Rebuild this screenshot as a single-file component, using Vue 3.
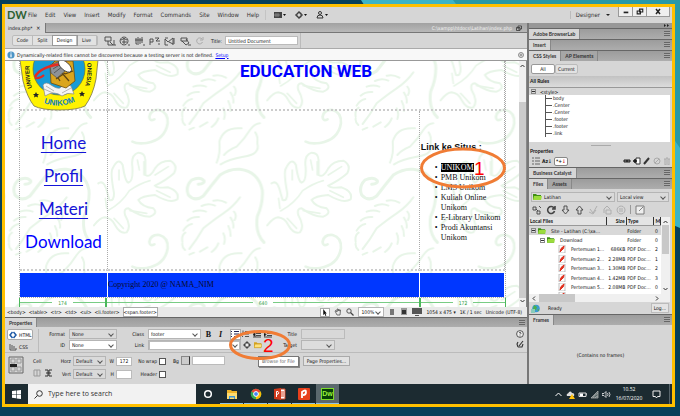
<script setup>
import { ref } from 'vue'

const menus = ['File', 'Edit', 'View', 'Insert', 'Modify', 'Format', 'Commands', 'Site', 'Window', 'Help']
const views = ['Code', 'Split', 'Design', 'Live']
const view = ref('Design')
const title = ref('Untitled Document')
const format = ref('None')
const idName = ref('None')
const className = ref('footer')
const link = ref('')
const pageTitle = ref('')
const cellWidth = ref('172')
const cellHeight = ref('')
const bg = ref('')
const search = ref('')

const toolIcons = [
  'M1 1h6v4H1zM4 5v4h6V4M6 6l3 3M10 9h2',
  'M5 1a4 4 0 1 0 .1 0M2 4q3-3 6 0M3 6h5M5 2v6M9 9h2',
  'M2 2v6M4 1v6M6 2v6M8 1v6M1 4h8M2 8h3M9 9h2',
  'M1 3v6M1 3h3v3H1M6 2h4l-3 3h4M9 8h2',
  'M1 2h3M1 9V3l3 3 5-4v7M5 6l4 2M1 9h3M10 2v6',
  'M2 2h6v3H2zM3 5l4 4 3-2-3-4M9 9h3'
]
const rules = ['body', '.Center', '.Center', '.footer', '.footer', '.link']
const files = [
  ['Pertemuan 1…', '686KB', '2'],
  ['Pertemuan 2…', '2.28MB', '1'],
  ['Pertemuan 3…', '1.30MB', '2'],
  ['Pertemuan 4…', '1.42MB', '3'],
  ['Pertemuan 5…', '2.08MB', '0'],
  ['Pertemuan 6…', '1.95MB', '0']
]
const nav = ['Home', 'Profil', 'Materi']
const tags = ['<body>', '<table>', '<tr>', '<td>', '<ul>', '<li.footer>']
const fileTools = [
  'M1 2h3v3H1zM5 6h3v3H5zM4 4l2 2M7 1l2 2',
  'M8 3a3.5 3.5 0 1 0 .5 3M9 1v3H6',
  'M4 1h3v4h2L5.500 9 2 5h2z',
  'M4 9h3V5h2L5.500 1 2 5h2z',
  'M2 4l3 4 4-7M1 7l4 2 3-4',
  'M2 8V4l3-3 3 3M4 5h5v4H4z',
  'M5 1a4 4 0 1 0 .1 0M3 4h4M3 6h4'
]
const offsets = [[0, 0], [-520, 0], [520, 0], [0, -375], [0, 375], [520, -375], [-520, 375]]
</script>

<template>
  <main class="desktop">
    <svg class="wallpaper" viewBox="0 0 680 416" preserveAspectRatio="none" aria-hidden="true">
      <path d="M0 0h680v416H0z" fill="#07405a" />
      <path d="M361 0H680V228L666 222V8H366z" fill="#3db4c7" />
      <path d="M453 0H680V148L666 128V8H459z" fill="#2899a8" />
    </svg>

    <div class="frame">
      <header class="menubar">
        <strong class="brand">DW</strong>
        <nav class="menus"><button v-for="m in menus" :key="m" type="button">{{ m }}</button></nav>
        <div class="quick">
          <svg class="i12" viewBox="0 0 12 10"><path d="M0 2h8v6H0z" fill="#444" /><path d="M2 3v4M4 3v4M0 5h6" stroke="#aaa" stroke-width=".6" /><path d="M9 4h3l-1.500 2z" fill="#111" /></svg>
          <svg class="i12" viewBox="0 0 12 10"><circle cx="4" cy="5" r="2.300" fill="none" stroke="#333" stroke-width="1.300" /><path d="M4 1v1M4 8v1M0 5h1M7 5h1" stroke="#333" /><path d="M9 4h3l-1.500 2z" fill="#111" /></svg>
          <svg class="i12" viewBox="0 0 12 10"><circle cx="4" cy="3" r="1.500" fill="none" stroke="#333" /><path d="M1 8q0-3 3-3t3 3z" fill="none" stroke="#333" /><path d="M9 4h3l-1.500 2z" fill="#111" /></svg>
        </div>
        <button type="button" class="workspace">Designer <span class="tri"></span></button>
        <div class="winbtns">
          <button type="button" aria-label="Minimize"><svg viewBox="0 0 14 9"><path d="M5 5.500h5" stroke="#222" stroke-width="1.800" /></svg></button>
          <button type="button" aria-label="Restore"><svg viewBox="0 0 14 9"><path d="M7 2h3.500v3H7zM4.500 4H8v3H4.500z" fill="#eee" stroke="#222" stroke-width="1.200" /></svg></button>
          <button type="button" aria-label="Close" class="wide"><svg viewBox="0 0 14 9"><path d="M5 2l4 5M9 2L5 7" stroke="#222" stroke-width="1.500" /></svg></button>
        </div>
      </header>

      <div class="work">
        <section class="editor">
          <div class="tabs">
            <span class="doctab">index.php* <b>×</b></span>
            <span class="path">C:\xampp\htdocs\Latihan\index.php</span>
            <svg class="i6" viewBox="0 0 6 6"><path d="M2 1h3.500v3H2zM.5 2.500H4v3H.5z" fill="#bbb" stroke="#333" stroke-width=".8" /></svg>
          </div>

          <div class="toolbar">
            <div class="views">
              <button v-for="v in views" :key="v" type="button" :class="{ on: v === view }" @click="view = v">{{ v }}</button>
            </div>
            <div class="tools">
              <svg v-for="(d, i) in toolIcons" :key="i" class="i12" viewBox="0 0 12 10"><path :d="d" fill="none" stroke="#444" stroke-width=".9" /></svg>
              <svg class="i12" viewBox="0 0 12 10"><path d="M8 3a3 3 0 1 0 .5 3M9 1v3H6" fill="none" stroke="#aaa" /></svg>
            </div>
            <label for="doc-title">Title:</label>
            <input id="doc-title" v-model="title" class="titlebox" />
            <span class="rule"></span>
          </div>

          <div class="info">
            <svg class="i8" viewBox="0 0 8 8"><circle cx="4" cy="4" r="3.600" fill="#4b94c6" /><path d="M4 3.300v3M4 1.500v1" stroke="#fff" stroke-width="1.200" /></svg>
            <span>Dynamically-related files cannot be discovered because a testing server is not defined.</span>
            <a href="#">Setup</a>
            <svg class="i6 end" viewBox="0 0 6 6"><circle cx="3" cy="3" r="2.500" fill="#ddd" stroke="#777" stroke-width=".8" /><path d="M2 2l2 2M4 2L2 4" stroke="#777" stroke-width=".6" /></svg>
          </div>

          <div class="docwrap">
            <div class="doc">
              <svg class="leaves" aria-hidden="true">
                <defs>
                  <pattern id="leaf" width="520" height="375" patternUnits="userSpaceOnUse" patternTransform="translate(95 39) scale(.3333)">
                    <g v-for="(o, i) in offsets" :key="i" :transform="`translate(${o[0]} ${o[1]})`" fill="none" stroke="#e8f5e8" stroke-linecap="round">
                      <path stroke-width="8" d="M163 433Q148 440 148 425Q152 403 178 405Q205 412 203 445Q195 495 140 504Q112 508 97 500" />
                      <path stroke-width="6" d="M-5 250Q10 240 18 265L28 300Q42 305 42 280Q30 215 38 205Q55 170 68 195Q75 245 85 248Q100 245 97 200Q92 165 115 158Q135 158 136 180V225Q150 235 165 205Q180 182 210 182Q235 195 222 220Q200 240 165 257Q170 265 205 262Q240 275 232 298Q210 312 165 285Q125 288 115 300Q125 320 160 325Q175 340 150 350Q120 350 85 325Q70 325 75 345Q95 380 80 397Q60 403 45 375Q35 355 15 352Q0 352-18 376" />
                      <path stroke-width="5" d="M22 333Q65 310 88 272Q120 250 150 242M132 185V225M112 180L118 210M57 210V240M165 225L205 200M170 272L210 292M90 332L140 340M42 355L70 385M16 295L20 325" />
                      <path stroke-width="6" d="M350 188Q362 160 358 125Q370 80 425 85M362 193Q385 178 430 170Q482 163 472 130Q475 110 466 97M372 165Q385 150 410 140Q435 115 450 90Q465 70 480 70" />
                      <path stroke-width="9" d="M295 253Q315 250 312 242Q300 228 275 240Q255 260 265 285Q285 307 310 288Q335 255 360 225Q390 205 420 208Q475 215 487 270Q490 310 472 350Q465 400 492 427" />
                      <path stroke-width="6" d="M268 447Q290 420 310 385Q340 360 370 340Q400 320 420 292M340 302Q360 297 378 308M305 318Q325 308 345 317M280 335Q300 328 318 335M262 362Q275 350 297 351M250 392Q258 376 276 372M247 425Q244 405 256 398M255 450Q245 440 247 430M268 464L282 458M300 455L322 442M335 456Q350 445 355 430M372 432Q378 415 370 400M392 408Q392 390 385 378M400 383Q402 368 392 353M404 360Q412 345 402 335" />
                    </g>
                  </pattern>
                </defs>
                <rect width="100%" height="100%" fill="url(#leaf)" />
              </svg>

              <div class="grid">
                <div class="c logo">
                  <svg viewBox="0 0 87 50" role="img" aria-label="Universitas Komputer Indonesia UNIKOM">
                    <path d="M0 -1L3 20Q7 36 14 45Q22 49 39 49Q57 49 65 45Q73 34 76 18L78 -1z" fill="#fff200" stroke="#76714a" stroke-width=".8" />
                    <g transform="translate(-1 0)">
                    <circle cx="40" cy="8" r="26" fill="#169bd7" stroke="#6d7433" stroke-width=".7" />
                    <path d="M24 24q3-4 8 0 6 4 9 3 5-6 11-2l3 8q-7-2-12 2-8-6-17 0z" fill="#f4f4f4" stroke="#888" stroke-width=".7" />
                    <path d="M25 28l9 4M27 25l8 5M43 32l9-5" stroke="#888" stroke-width=".6" />
                    <path d="M31 5l5-5h18l2 20-9 7-15-5z" fill="#dba51d" stroke="#6d4c10" stroke-width=".8" />
                    <path d="M33 7l8 13M36 4l14 16M46 13l8-3M37 18l9-6" stroke="#604713" stroke-width="1.300" />
                    <path d="M31 4l8-3 7 9-8 7-6-5z" fill="#8e9298" stroke="#444" stroke-width=".6" />
                    <path d="M34 8l8-5M35 12l9-7" stroke="#333" stroke-width=".6" />
                    <path d="M16 16Q21 5 48 2" fill="none" stroke="#e52b22" stroke-width="2.600" />
                    <path d="M16 17q5 1 9-3" fill="none" stroke="#e52b22" stroke-width="2" />
                    <ellipse cx="46" cy="5" rx="8" ry="4" transform="rotate(42 46 5)" fill="#fff" stroke="#333" stroke-width=".8" />
                    <path d="M17 31l1 2h2l-1.500 1.500.5 2-2-1-2 1 .5-2-1.500-1.500h2zM63 30l1 2h2l-1.500 1.500.5 2-2-1-2 1 .5-2-1.500-1.500h2z" fill="#222" />
                    <path id="arcL" d="M13 27Q9 14 11 0" fill="none" />
                    <path id="arcR" d="M68 2Q70 15 65 28" fill="none" />
                    <path id="arcB" d="M20 40Q40 50 61 38" fill="none" />
                    <text class="seal"><textPath href="#arcL">UNIVER</textPath></text>
                    <text class="seal"><textPath href="#arcR">ONESIA</textPath></text>
                    <text class="seal big"><textPath href="#arcB" startOffset="50%" text-anchor="middle">UNIKOM</textPath></text>
                    </g>
                  </svg>
                </div>
                <div class="c heading"><h1>EDUCATION WEB</h1></div>
                <nav class="c sitenav">
                  <a v-for="n in nav" :key="n" href="#">{{ n }}</a>
                  <a href="#" class="plain">Download</a>
                </nav>
                <div class="c"></div>
                <div class="c links">
                  <h2>Link ke Situs :</h2>
                  <ul>
                    <li><mark>UNIKOM</mark></li>
                    <li>PMB Unikom</li>
                    <li>LMS Unikom</li>
                    <li>Kuliah Online Unikom</li>
                    <li>E-Library Unikom</li>
                    <li>Prodi Akuntansi Unikom</li>
                  </ul>
                </div>
                <div class="f"></div>
                <div class="f">Copyright 2020 @ NAMA_NIM</div>
                <div class="f"></div>
              </div>

              <div class="ruler">
                <span>174</span><span>640</span><span>172</span>
              </div>
            </div>
            <div class="vscroll">
              <svg viewBox="0 0 7 6"><path d="M1.500 4L3.500 2l2 2" fill="none" stroke="#333" /></svg>
              <span class="thumb"></span>
              <svg viewBox="0 0 7 6"><path d="M1.500 2l2 2 2-2" fill="none" stroke="#333" /></svg>
            </div>
          </div>

          <div class="status">
            <span v-for="t in tags" :key="t">{{ t }}</span>
            <span class="cur">&lt;span.footer&gt;</span>
            <div class="stools">
              <button type="button" aria-label="Select" class="arrowbtn"><svg viewBox="0 0 8 8"><path d="M2 0l4 5H4.500L5.500 7.500l-1 .5L3.400 5.500 2 7z" fill="#111" /></svg></button>
              <svg class="i8" viewBox="0 0 8 8"><path d="M2 5L1 3l1-.5L3 4V1h1v2l1-2v2l1.500-1L6 7H3z" fill="none" stroke="#555" stroke-width=".8" /></svg>
              <svg class="i8" viewBox="0 0 8 8"><circle cx="3" cy="3" r="2.200" fill="none" stroke="#555" /><path d="M4.500 4.500l3 3" stroke="#444" stroke-width="1.300" /></svg>
              <span class="sel zoom"><select aria-label="Zoom"><option>100%</option></select></span>
              <svg class="i8" viewBox="0 0 8 8"><path d="M2 1h4v6H2z" fill="#777" /></svg>
              <svg class="i8" viewBox="0 0 8 8"><path d="M1 0h6v7H1z" fill="#999" /><path d="M2 2h4v4H2z" fill="#333" /></svg>
              <svg class="i10" viewBox="0 0 10 8"><path d="M0 0h10v6H0zM3 7h4v1H3z" fill="#555" /></svg>
              <span>1054 x 475 ▾</span><span>1K / 1 sec</span><span>Unicode (UTF-8)</span>
            </div>
          </div>

          <div class="panelhead"><span class="ptab">Properties</span><i class="pm"></i></div>

          <div class="props">
            <div class="modes">
              <button type="button" class="on"><svg class="i8" viewBox="0 0 8 8"><path d="M3.500 1L1 4l2.500 3M4.500 1L7 4 4.500 7" fill="none" stroke="#1f5aa6" stroke-width="1.500" /></svg> HTML</button>
              <button type="button"><svg class="i8" viewBox="0 0 8 8"><path d="M1 1v6h6M3 2v4M5 3v3M7 5v2" fill="none" stroke="#555" /></svg> CSS</button>
            </div>
            <div class="pairs p1">
              <label for="fmt">Format</label><span class="sel dim"><select id="fmt" v-model="format"><option>None</option></select></span>
              <label for="idn">ID</label><span class="sel"><select id="idn" v-model="idName"><option>None</option></select></span>
            </div>
            <div class="pairs p2">
              <label for="cls">Class</label>
              <div class="line">
                <span class="sel cls"><select id="cls" v-model="className"><option>footer</option></select></span>
                <button type="button" class="fmt"><b>B</b></button><button type="button" class="fmt"><b><i>I</i></b></button>
                <button type="button" class="lst on" aria-label="Unordered list"><svg viewBox="0 0 8 7"><path d="M0 1h1M0 3.500h1M0 6h1M3 1h5M3 3.500h5M3 6h5" stroke="#225" /></svg></button>
                <button type="button" class="lst" aria-label="Ordered list"><svg viewBox="0 0 8 7"><path d="M1 0v3M0 6h1M3 1h4M3 3.500h4M3 6h4" stroke="#555" /></svg></button>
                <button type="button" class="lst" aria-label="Outdent"><svg viewBox="0 0 8 7"><path d="M0 1h8M3 3h5M3 5h5M0 6.500h8M0 4l2-2v4z" stroke="#333" stroke-width=".9" /></svg></button>
                <button type="button" class="lst" aria-label="Indent"><svg viewBox="0 0 8 7"><path d="M0 1h8M3 3h5M3 5h5M0 6.500h8M2 4L0 2v4z" stroke="#333" stroke-width=".9" /></svg></button>
              </div>
              <label for="lnk">Link</label>
              <div class="line">
                <span class="sel lnk"><input id="lnk" v-model="link" /></span>
                <button type="button" class="lst wide" aria-label="Point to File"><svg viewBox="0 0 8 8"><circle cx="4" cy="4" r="2.500" fill="#eee" stroke="#333" /><path d="M4 0v3M4 5v3M0 4h3M5 4h3" stroke="#333" stroke-width=".8" /></svg></button>
                <button type="button" class="lst" aria-label="Browse for File"><svg viewBox="0 0 9 8"><path d="M0 7V1h3l1 1h4v5z" fill="#d9a520" /><path d="M0 7l1-4h8L8 7z" fill="#ffe27a" stroke="#b98b14" stroke-width=".6" /></svg></button>
              </div>
            </div>
            <div class="pairs p3">
              <label for="ttl">Title</label><input id="ttl" v-model="pageTitle" class="off" />
              <label for="tgt">Target</label><span class="sel tgt"><select id="tgt" disabled><option></option></select></span>
            </div>
            <div class="help">
              <svg viewBox="0 0 8 8"><circle cx="4" cy="4" r="3.400" fill="#eee" stroke="#333" stroke-width=".8" /><path d="M3 3q1-1.500 2 0 0 .7-1 1.500M4 5.500v1" fill="none" stroke="#333" stroke-width=".8" /></svg>
              <svg viewBox="0 0 8 8"><path d="M2 7L1 4l1-2M3 6l4-5M2 7h4l1-3" fill="none" stroke="#333" stroke-width="1.100" /></svg>
            </div>
          </div>

          <div class="props cellprops">
            <div class="cellicon"><svg viewBox="0 0 16 18"><path d="M1 1h14v16H1z" fill="#d5d5d5" stroke="#666" /><path d="M3 3h4v4H3zM9 3h4v4H9zM3 11h4v4H3zM9 11h4v4H9z" fill="none" stroke="#999" /><path d="M2 8h7v3H2z" fill="#222" /></svg></div>
            <div class="cellname">
              <span>Cell</span>
              <svg viewBox="0 0 20 8"><path d="M1 1h6v6H1zM4 1v6" fill="none" stroke="#999" /><path d="M12 1h3v6h-3M19 1h-3v6h3M13 4h5" fill="none" stroke="#333" /></svg>
            </div>
            <div class="pairs p4">
              <label for="hz">Horz</label><span class="sel dim"><select id="hz"><option>Default</option></select></span>
              <label for="vt">Vert</label><span class="sel dim"><select id="vt"><option>Default</option></select></span>
            </div>
            <div class="pairs p5">
              <label for="w">W</label><input id="w" v-model="cellWidth" />
              <label for="h">H</label><input id="h" v-model="cellHeight" />
            </div>
            <div class="pairs p6">
              <label for="nw">No wrap</label><input id="nw" type="checkbox" />
              <label for="hd">Header</label><input id="hd" type="checkbox" />
            </div>
            <div class="bgline">
              <label for="bg">Bg</label><span class="swatch"></span><input id="bg" v-model="bg" />
              <span class="tip" role="tooltip">Browse for File</span>
              <button type="button" class="pp">Page Properties...</button>
            </div>
          </div>
        </section>

        <aside class="dock">
          <div class="dockbar"><svg viewBox="0 0 6 5"><path d="M0 1l2 1.500L0 4zM3 1l2 1.500L3 4z" fill="#222" /></svg></div>
          <div class="panelhead"><span class="ptab">Adobe BrowserLab</span><i class="pm"></i></div>
          <div class="panelhead"><span class="ptab">Insert</span><i class="pm"></i></div>
          <div class="panelhead"><span class="ptab">CSS Styles</span><span class="ptab back">AP Elements</span><i class="pm"></i></div>
          <div class="seg"><button type="button" class="on">All</button><button type="button">Current</button></div>
          <h3 class="allrules">All Rules</h3>
          <div class="tree">
            <div class="root"><span class="box"></span>&lt;style&gt;</div>
            <ul><li v-for="(r, i) in rules" :key="i">{{ r }}</li></ul>
          </div>
          <div class="grip"></div>
          <h3 class="subhead">Properties</h3>
          <div class="picons">
            <svg class="i8" viewBox="0 0 8 8"><path d="M0 1h2M0 4h2M0 7h2M3 1h5M3 4h5M3 7h5" stroke="#666" /></svg>
            <span class="az">Az↓</span>
            <span class="star">*+<b>↓</b></span>
            <svg class="i8 first" viewBox="0 0 8 8"><path d="M1 3h3v2H1zM4 3h3v2H4z" fill="#888" stroke="#222" /></svg>
            <svg class="i8" viewBox="0 0 8 8"><path d="M3 1h4v6H3z" fill="#fff" stroke="#333" /><path d="M0 4h4M2 2v4" stroke="#111" stroke-width="1.500" /></svg>
            <svg class="i8" viewBox="0 0 8 8"><path d="M1 7l5-6" stroke="#333" stroke-width="2" /></svg>
            <svg class="i8" viewBox="0 0 8 8"><circle cx="4" cy="4" r="3" fill="none" stroke="#aaa" /><path d="M2 6l4-4" stroke="#aaa" /></svg>
            <svg class="i8" viewBox="0 0 8 8"><path d="M1 2h6M2 2v6h4V2M3 1h2M4 3v4" fill="none" stroke="#aaa" /></svg>
          </div>
          <div class="panelhead"><span class="ptab">Business Catalyst</span><i class="pm"></i></div>
          <div class="panelhead"><span class="ptab">Files</span><span class="ptab back">Assets</span><i class="pm"></i></div>
          <div class="combos">
            <span class="sel flat"><svg class="fold" viewBox="0 0 9 8"><path d="M0 7V1h3l1 1h4v5z" fill="#3f8f14" /><path d="M0 7l1-4h8L8 7z" fill="#9bdc3c" /></svg><select aria-label="Site"><option>Latihan</option></select></span>
            <span class="sel flat"><select aria-label="View"><option>Local view</option></select></span>
          </div>
          <div class="ftools">
            <svg v-for="(d, i) in fileTools" :key="i" viewBox="0 0 10 10"><path :d="d" fill="none" :stroke="i > 3 ? '#aaa' : '#444'" :stroke-width="i === 1 ? 1.6 : .9" /></svg>
            <span class="bar"></span>
            <svg viewBox="0 0 10 10"><path d="M1 1h8v8H1zM4 6l4-4" fill="#eee" stroke="#666" stroke-width=".8" /></svg>
          </div>
          <div class="files">
            <div class="flist">
              <table>
                <thead><tr><th>Local Files</th><th class="r">Size</th><th>Type</th><th>M</th></tr></thead>
                <tbody>
                  <tr class="hl"><td><span class="name"><span class="box"></span><svg viewBox="0 0 9 8"><path d="M0 7V1h3l1 1h4v5z" fill="#3f8f14" /><path d="M0 7l1-4h8L8 7z" fill="#9bdc3c" /></svg> <em>Site - Latihan (C:\xa…</em></span></td><td></td><td>Folder</td><td>0</td></tr>
                  <tr><td><span class="name l1"><span class="box"></span><svg viewBox="0 0 9 8"><path d="M0 7V1h3l1 1h4v5z" fill="#3f8f14" /><path d="M0 7l1-4h8L8 7z" fill="#9bdc3c" /></svg> <em>Download</em></span></td><td></td><td>Folder</td><td>0</td></tr>
                  <tr v-for="f in files" :key="f[0]">
                    <td><span class="name l2"><svg viewBox="0 0 8 8"><path d="M1 0h6v8H1z" fill="#fff" stroke="#999" stroke-width=".6" /><path d="M2 7q0-4 4-6 0 3-2 4z" fill="#e0301e" stroke="#e0301e" /></svg> <em>{{ f[0] }}</em></span></td>
                    <td class="r">{{ f[1] }}</td><td>PDF Doc…</td><td>{{ f[2] }}</td>
                  </tr>
                </tbody>
              </table>
            </div>
            <div class="fscroll">
              <svg viewBox="0 0 7 6"><path d="M1.500 4L3.500 2l2 2" fill="none" stroke="#333" /></svg>
              <span class="thumb"></span>
              <svg viewBox="0 0 7 6"><path d="M1.500 2l2 2 2-2" fill="none" stroke="#333" /></svg>
            </div>
          </div>
          <div class="hscroll">
            <svg viewBox="0 0 6 7"><path d="M4 1.500L2 3.500l2 2" fill="none" stroke="#333" /></svg>
            <span></span>
            <svg viewBox="0 0 6 7"><path d="M2 1.500l2 2-2 2" fill="none" stroke="#333" /></svg>
          </div>
          <div class="ready">
            <svg viewBox="0 0 9 9"><circle cx="5" cy="4.500" r="3.800" fill="#3c9bd0" /><path d="M3 1l3 2-1 3-3-1M6 6l2-1v2z" fill="#4bb04b" /><path d="M0 5h4v4H0z" fill="#8cb" /></svg>
            <span>Ready</span><button type="button">Log...</button>
          </div>
          <div class="panelhead"><span class="ptab">Frames</span><i class="pm"></i></div>
          <div class="frames">(Contains no frames)</div>
        </aside>
      </div>

      <footer class="taskbar">
        <button type="button" class="start" aria-label="Start"><svg viewBox="0 0 9 9"><path d="M0 1l4-.5V4H0zM4.600.4L9 0v4H4.600zM0 4.600h4v3.600L0 7.700zM4.600 4.600H9V9l-4.400-.6z" fill="#fff" /></svg></button>
        <label class="search">
          <svg viewBox="0 0 9 9"><circle cx="5.500" cy="3.500" r="2.800" fill="none" stroke="#333" /><path d="M3.500 5.500L.5 8.500" stroke="#333" /></svg>
          <input v-model="search" placeholder="Type here to search" aria-label="Search" />
        </label>
        <div class="apps">
          <span><svg viewBox="0 0 12 12"><circle cx="6" cy="6" r="3.300" fill="none" stroke="#fff" stroke-width="1.500" /></svg></span>
          <span class="run"><svg viewBox="0 0 12 12"><path d="M1 2h4l1 1h5v8H1z" fill="#f0b429" /><path d="M1 5h10v6H1z" fill="#ffdc70" /><path d="M3 8h6v3H8V9.500H4V11H3z" fill="#3b96dc" /></svg></span>
          <span class="run"><svg viewBox="0 0 12 12"><circle cx="6" cy="6" r="5.300" fill="#34a853" /><path d="M6 6L1.400 3.400A5.300 5.300 0 0 1 10.600 3.400z" fill="#ea4335" /><path d="M6 6l4.600-2.600A5.300 5.300 0 0 1 6 11.300z" fill="#fbbc05" /><circle cx="6" cy="6" r="2.400" fill="#4285f4" stroke="#fff" /></svg></span>
          <span class="run"><svg viewBox="0 0 12 12"><path d="M6 1h5v10H6z" fill="#fff" stroke="#d24726" /><path d="M7 4h3M7 6h3M7 8h3" stroke="#d24726" /><path d="M0 1l7-1v12l-7-1z" fill="#d03a1c" /><path d="M2.500 9V3.500h1.500q1.500 1.200 0 2.700H2.500" fill="none" stroke="#fff" /></svg></span>
          <span class="run"><svg viewBox="0 0 12 12"><rect width="12" height="12" rx="1" fill="#e8401c" /><path d="M4 10V4q4-3 4 0 0 3-3 3" fill="none" stroke="#fff" stroke-width="1.800" /></svg></span>
          <span class="run active"><b>Dw</b></span>
        </div>
        <div class="tray">
          <svg viewBox="0 0 9 9"><path d="M1.500 6l3-3 3 3" fill="none" stroke="#fff" /></svg>
          <svg viewBox="0 0 9 9"><path d="M1 6q-1-2 1-2.500Q4 0 6 3q3 0 2 3z" fill="#ddd" /><path d="M6 4l3 5H3z" fill="#ffc20e" /></svg>
          <svg viewBox="0 0 9 9"><path d="M1 3h7v3.500H1zM8 4h1v1.500" fill="none" stroke="#ddd" /><path d="M2 3.500h3v2.500H2z" fill="#fff" /></svg>
          <svg viewBox="0 0 9 9"><path d="M1 8L8 1v7zM3 8q0-2 5-5M5 8q0-1 3-2" fill="#566" stroke="#bbb" stroke-width=".7" /></svg>
          <svg viewBox="0 0 9 9"><path d="M0 3.500h2l2-2v6l-2-2H0zM5.500 3q1 1.500 0 3M7 2q2 2.500 0 5" fill="none" stroke="#eee" stroke-width=".8" /></svg>
          <time>10.52<br />16/07/2020</time>
          <svg viewBox="0 0 9 9"><path d="M1 1h7v5.500H5.500L4.500 8l-1-1.500H1z" fill="none" stroke="#eee" /></svg>
          <i></i>
        </div>
      </footer>

      <svg class="marks" viewBox="5 7 667 397" preserveAspectRatio="none" aria-hidden="true">
        <ellipse cx="463" cy="168" rx="41.500" ry="19" />
        <ellipse cx="260" cy="345" rx="29.500" ry="13.500" />
        <text x="474" y="175">1</text>
        <text x="263" y="352">2</text>
      </svg>
    </div>
  </main>
</template>

<style>
html, body { margin: 0; }
</style>

<style scoped>
* { box-sizing: border-box; }
svg { display: block; flex: none; }
button, input, select { font: inherit; color: inherit; margin: 0; padding: 0; border: 0; border-radius: 0; background: none; min-width: 0; }
button { cursor: pointer; }
select { appearance: none; width: 100%; height: 100%; padding-left: 2px; }
ul { list-style: none; margin: 0; padding: 0; }
h1, h2, h3 { margin: 0; }

.desktop { position: relative; min-height: 100vh; padding: 4px 5px 9px 2px; display: flex; font: 5px/8px "DejaVu Sans Condensed", "Liberation Sans", sans-serif; color: #111; overflow: hidden; }
.wallpaper { position: absolute; inset: 0; width: 100%; height: 100%; }
.frame { position: relative; flex: 1; min-width: 0; border: 3px solid #ffc000; background: #d6d6d6; display: flex; flex-direction: column; }
.marks { position: absolute; inset: 0; width: 100%; height: 100%; pointer-events: none; }
.marks ellipse { fill: none; stroke: #f07c35; stroke-width: 3; }
.marks text { fill: #f00; font: 19px "Liberation Sans", sans-serif; }

.i12 { width: 12px; height: 10px; }
.i10 { width: 10px; height: 8px; }
.i8 { width: 8px; height: 8px; }
.i6 { width: 6px; height: 6px; }

.menubar { height: 16px; display: flex; align-items: center; padding: 0 2px; font-size: 6px; color: #333; }
.brand { width: 21px; font: bold 11px/14px "Lato", sans-serif; color: #2c6032; }
.menus { display: flex; gap: 8px; }
.quick { display: flex; gap: 9px; margin-left: 6px; padding-left: 8px; border-left: 1px solid #c4c4c4; }
.workspace { margin-left: auto; display: flex; align-items: center; gap: 6px; padding: 0 8px 0 5px; border-left: 1px solid #bbb; }
.tri { border: 2px solid transparent; border-top-color: #222; border-bottom: 0; }
.winbtns { display: flex; align-self: flex-start; border: 1px solid #999; border-top: 0; background: #efefef; }
.winbtns button { width: 14px; height: 9px; border-right: 1px solid #999; }
.winbtns button svg { width: 100%; height: 9px; }
.winbtns .wide { width: 22px; border-right: 0; }

.work { flex: 1; display: grid; grid-template-columns: minmax(0, 1fr) 145px; min-height: 0; }
.editor { display: flex; flex-direction: column; min-width: 0; min-height: 0; }
.tabs { height: 10px; display: flex; align-items: center; padding-right: 5px; background: linear-gradient(#a2a2a2, #b8b8b8); border-bottom: 1px solid #777; }
.doctab { height: 10px; padding: 0 4px 0 3px; background: #d6d6d6; border-right: 1px solid #777; line-height: 10px; }
.doctab b { margin-left: 2px; font-weight: normal; font-size: 6px; }
.path { margin: 0 4px 0 auto; color: #f2f2f2; }
.toolbar { height: 16px; display: flex; align-items: center; padding-left: 7px; border-bottom: 1px solid #aaa; }
.views { display: flex; border: 1px solid #bbb; border-radius: 2px; background: #e2e2e2; }
.views button { height: 9px; min-width: 20px; padding: 0 3px; border-right: 1px solid #bbb; line-height: 9px; }
.views button.on { background: #fff; outline: 1px solid #999; min-width: 24px; }
.tools { display: flex; gap: 3px; margin: 0 5px 0 6px; }
.titlebox { width: 73px; height: 9px; margin-left: 3px; padding-left: 2px; background: #fff; border: 1px solid #bbb; }
.rule { width: 1px; height: 15px; margin-left: 2px; background: #bbb; }
.info { height: 12px; display: flex; align-items: center; gap: 2px; padding: 0 3px 0 2px; background: #f8f8f8; border-bottom: 1px solid #999; }
.info a { color: #00f; }
.end { margin-left: auto; }

.docwrap { flex: 1; display: flex; min-height: 0; }
.doc { position: relative; flex: 1; min-width: 0; display: flex; flex-direction: column; padding: 0 13px 0 14px; background: #fff; overflow: hidden; }
.leaves { position: absolute; inset: 0; width: 100%; height: 100%; }
.grid { position: relative; flex: 1; display: grid; grid-template-columns: 87fr 314fr 86fr; grid-template-rows: 50px minmax(0, 1fr) 26px; border: 1px dotted #aaa; border-top: 0; }
.c { border-right: 1px dotted #aaa; border-bottom: 2px dotted #ccc; min-height: 0; }
.heading { grid-column: span 2; text-align: center; color: #00f; }
.heading h1 { font: bold 17px/20px "Roboto", "Open Sans", sans-serif; }
.logo svg { width: 87px; height: 50px; }
.seal { font: bold 6px "Liberation Sans", sans-serif; fill: #222; }
.seal.big { font-size: 8px; fill: #137fc0; }
.sitenav { display: flex; flex-direction: column; align-items: center; padding-top: 15px; font: 17px/33px "Lato", "Open Sans", sans-serif; }
.sitenav a { color: #1414d8; text-underline-offset: 3px; text-decoration-thickness: 1px; }
.sitenav .plain { text-decoration: none; color: #00f; }
.links { padding-top: 30px; color: #111; }
.links h2 { font: bold 9px/12px "Liberation Sans", sans-serif; padding-left: 1px; white-space: nowrap; }
.links ul { padding: 10px 0 0 21px; font: 8px/10px "Liberation Serif", serif; }
.links li::before { content: "•"; display: inline-block; width: 6px; margin-left: -6px; }
.links mark { background: #000; color: #fff; }
.f { margin-top: 2px; background: #0037ff; color: #0a0a28; font: 8px/24px "Liberation Serif", serif; border-right: 1px solid #fff; }
.ruler { position: relative; height: 9px; display: grid; grid-template-columns: 87fr 314fr 86fr; color: #2b9a3e; font-size: 5px; }
.ruler span { display: flex; align-items: center; gap: 6px; border-right: 1px solid #4cb85c; border-left: 1px solid #4cb85c; }
.ruler span::before, .ruler span::after { content: ""; flex: 1; height: 1px; background: #78cc84; }

.vscroll { width: 8px; display: flex; flex-direction: column; justify-content: space-between; padding: 2px 0 3px; background: #f0f0f0; border-right: 1px solid #888; }
.vscroll svg { width: 7px; height: 6px; }
.vscroll .thumb { flex: 1; margin-top: 33px; background: #cbcbcb; }

.status { height: 10px; display: flex; align-items: center; gap: 3px; padding: 0 5px 0 2px; background: #e9e9e9; white-space: nowrap; }
.cur { border: 1px solid #aaa; background: #fff; }
.stools { margin-left: auto; display: flex; align-items: center; gap: 4px; }
.arrowbtn { width: 10px; height: 9px; border: 1px solid #aaa; background: #fff; }
.arrowbtn svg { width: 8px; height: 7px; }
.zoom { width: 26px; height: 9px; background: #fff; }

.panelhead { flex: none; height: 11px; display: flex; background: linear-gradient(#9c9c9c, #adadad); border-top: 1px solid #666; color: #333; font: bold 5px/10px "Lato", "Liberation Sans", sans-serif; }
.ptab { padding: 0 4px; background: #d6d6d6; border-right: 1px solid #888; }
.ptab.back { background: #a6a6a6; }
.pm { width: 6px; height: 5px; margin: 2px 2px 0 auto; border: 1px solid #666; border-width: 1px 0; background: linear-gradient(#aaa 1px, #666 1px, #666 2px, #aaa 2px); }
.editor > .panelhead { height: 10px; }

.sel { position: relative; display: flex; align-items: center; height: 10px; background: #fff; border: 1px solid #b5b5b5; }
.sel::after { content: ""; position: absolute; right: 3px; top: 2px; width: 3px; height: 3px; border: 1px solid #555; border-width: 0 1px 1px 0; transform: rotate(45deg); pointer-events: none; }
.sel.dim, .sel.flat { background: #dadada; }
.props { height: 26px; display: flex; padding: 2px 3px 0 2px; border-bottom: 1px solid #bbb; }
.modes { width: 32px; display: flex; flex-direction: column; gap: 1px; border-right: 1px solid #bbb; }
.modes button { width: 26px; height: 11px; display: flex; align-items: center; gap: 2px; padding-left: 1px; border: 1px solid transparent; border-radius: 2px; }
.modes .on { background: #fff; border-color: #aaa; }
.pairs { display: grid; grid-template-rows: 10px 10px; gap: 1px 4px; align-content: start; align-items: center; }
.pairs label { text-align: right; white-space: nowrap; }
.p1 { grid-template-columns: 26px 48px; }
.p2 { grid-template-columns: 27px auto; }
.p3 { grid-template-columns: 24px 44px; }
.line { display: flex; align-items: center; gap: 2px; }
.cls { width: 53px; }
.lnk { width: 93px; }
.lnk input { width: 100%; }
.fmt { width: 9px; margin-left: 1px; font: 8px/9px "Liberation Serif", serif; }
.fmt + .lst { margin-left: 4px; }
.lst { width: 9px; height: 9px; }
.lst svg { width: 8px; height: 8px; }
.lst.on { background: #fff; outline: 1px solid #aaa; }
.off { height: 10px; border: 1px solid #b5b5b5; }
.tgt { width: 34px; background: #ddd; }
.help { margin-left: auto; display: flex; flex-direction: column; gap: 2px; padding-top: 1px; }
.help svg { width: 8px; height: 8px; }

.cellprops { height: 31px; border: 0; padding-top: 3px; }
.pairs input:not([type="checkbox"]), .bgline input { height: 9px; background: #fff; border: 1px solid #bbb; text-align: center; width: 100%; }
.pairs input.off { background: #d8d8d8; height: 10px; }
.pairs input[type="checkbox"] { appearance: none; width: 7px; height: 7px; background: #fff; border: 1px solid #555; }
.cellicon { width: 18px; padding-left: 1px; }
.cellicon svg { width: 16px; height: 18px; }
.cellname { width: 26px; padding-left: 8px; line-height: 10px; display: grid; gap: 3px; align-content: start; }
.cellname svg { width: 20px; height: 8px; }
.cellprops .pairs { row-gap: 3px; }
.p4 { grid-template-columns: 20px 33px; column-gap: 2px; }
.p5 { grid-template-columns: 8px 16px; column-gap: 2px; }
.p6 { grid-template-columns: 25px 8px; column-gap: 2px; }
.bgline { display: flex; align-items: flex-start; padding-left: 6px; gap: 2px; line-height: 10px; }
.swatch { width: 9px; height: 9px; border: 1px solid #888; background: #ccc; border-right-color: #333; }
.bgline input { width: 33px; }
.tip { margin: 0 2px 0 31px; padding: 0 3px; background: #fff; border: 1px solid #777; box-shadow: 1px 1px 0 #888; color: #666; white-space: nowrap; line-height: 9px; }
.pp { height: 10px; padding: 0 3px; border: 1px solid #aaa; background: #e2e2e2; white-space: nowrap; line-height: 8px; }

.dock { min-width: 0; min-height: 0; display: flex; flex-direction: column; border-left: 2px solid #777; background: #d6d6d6; }
.dockbar { height: 5px; display: flex; justify-content: flex-end; padding-right: 2px; background: #989898; }
.dockbar svg { width: 6px; height: 5px; }
.seg { height: 15px; display: flex; padding: 3px 2px; line-height: 8px; }
.seg button { height: 10px; padding: 0 2px; border: 1px solid #bbb; background: #e2e2e2; border-radius: 2px; }
.seg .on { width: 24px; background: #fff; border-color: #999; }
.allrules, .subhead { font: bold 5px/10px "Lato", "Liberation Sans", sans-serif; padding-left: 1px; }
.allrules { height: 12px; background: linear-gradient(#c2c2c2, #dcdcdc); border-bottom: 1px solid #999; }
.tree { height: 54px; background: #fff; margin-right: 2px; }
.root { display: flex; align-items: center; gap: 4px; padding-left: 2px; height: 7px; background: #d8d8d8; }
.box { width: 5px; height: 5px; padding: 1px 0; border: 1px solid #888; background: linear-gradient(#333, #333) content-box #fff; flex: none; }
.tree ul { margin-left: 16px; border-left: 1px solid #555; }
.tree li { display: flex; align-items: center; height: 7px; gap: 1px; line-height: 7px; }
.tree li::before { content: ""; width: 6px; height: 1px; background: #555; }
.grip { width: 20px; height: 2px; margin: 3px auto 0; border-top: 1px solid #aaa; }
.subhead { line-height: 8px; }
.picons { height: 12px; display: flex; align-items: center; gap: 2px; padding: 0 1px 0 3px; font-weight: bold; }
.picons .first { margin-left: auto; }
.star { border: 1px solid #888; border-radius: 2px; background: #fff; padding: 0 1px; line-height: 7px; }
.star b { color: #c22; }
.combos { display: grid; grid-template-columns: 84fr 52fr; gap: 2px; padding: 3px 3px 0 2px; }
.fold { width: 9px; height: 8px; margin-left: 1px; }
.ftools { height: 15px; display: flex; align-items: center; gap: 4px; padding-left: 3px; }
.ftools svg { width: 10px; height: 10px; }
.bar { width: 1px; height: 9px; background: #999; }
.files { flex: none; display: flex; height: 77px; margin-right: 2px; background: #fff; }
.flist { flex: 1; min-width: 0; overflow: hidden; }
table { width: 100%; height: 84px; border-collapse: collapse; table-layout: fixed; }
th, td { padding: 0 1px; text-align: left; white-space: nowrap; overflow: hidden; line-height: 8px; }
th { border-right: 1px solid #333; background: #e4e4e4; border-bottom: 1px solid #999; font-family: "Lato", "Liberation Sans", sans-serif; }
th:nth-child(1) { width: 59%; }
th:nth-child(2) { width: 15%; }
th:nth-child(3) { width: 21%; }
.r { text-align: right; }
.hl { background: #d8d8d8; }
.name { display: flex; align-items: center; gap: 2px; padding-left: 1px; }
.name em { font-style: normal; margin-left: 3px; }
.name svg { width: 8px; height: 8px; }
.l1 { padding-left: 10px; }
.l2 { padding-left: 28px; }
.fscroll { width: 9px; display: flex; flex-direction: column; align-items: center; padding: 2px 0; background: #f0f0f0; }
.fscroll svg { width: 7px; height: 6px; }
.fscroll .thumb { width: 7px; height: 29px; margin-bottom: auto; background: #c8c8c8; }
.hscroll { height: 8px; margin-right: 2px; display: flex; align-items: center; gap: 2px; padding: 0 10px 0 2px; background: #f0f0f0; }
.hscroll svg { width: 6px; height: 7px; }
.hscroll span { width: 36px; height: 8px; margin-right: auto; background: #c8c8c8; }
.ready { height: 12px; display: flex; align-items: center; padding: 0 3px 0 2px; gap: 8px; }
.ready svg { width: 9px; height: 9px; }
.ready button { margin-left: auto; padding: 0 2px; border: 1px solid #bbb; background: #e4e4e4; }
.frames { flex: 1; display: grid; place-items: center; }

.taskbar { height: 20px; flex: none; display: flex; background: #1c2b31; color: #fff; }
.start { width: 23px; display: grid; place-items: center; background: #1c2b31; }
.start svg { width: 9px; height: 9px; }
.search { width: 168px; display: flex; align-items: center; gap: 5px; padding-left: 6px; background: #f2f2f2; color: #333; font: 7px/10px "Open Sans", sans-serif; }
.search svg { width: 9px; height: 9px; }
.search input { flex: 1; outline: 0; }
.search input::placeholder { color: #333; opacity: 1; }
.apps { display: flex; gap: 1px; }
.apps span { width: 23px; display: grid; place-items: center; border-bottom: 1px solid transparent; }
.apps svg { width: 12px; height: 12px; }
.apps .run { border-bottom-color: #8cc5e8; }
.apps .active { background: #5b686d; }
.apps b { width: 11px; height: 10px; background: #073f07; outline: 1px solid #7ddb2a; color: #9bf03c; font: bold 7px/10px "Liberation Sans", sans-serif; text-align: center; }
.tray { margin-left: auto; display: flex; align-items: center; gap: 3px; text-align: center; }
.tray svg { width: 9px; height: 9px; }
.tray time { width: 30px; margin-right: 5px; font: 5px/9px "Open Sans", sans-serif; }
.tray i { width: 1px; height: 20px; margin: 0 2px 0 5px; background: #56646a; }
</style>
